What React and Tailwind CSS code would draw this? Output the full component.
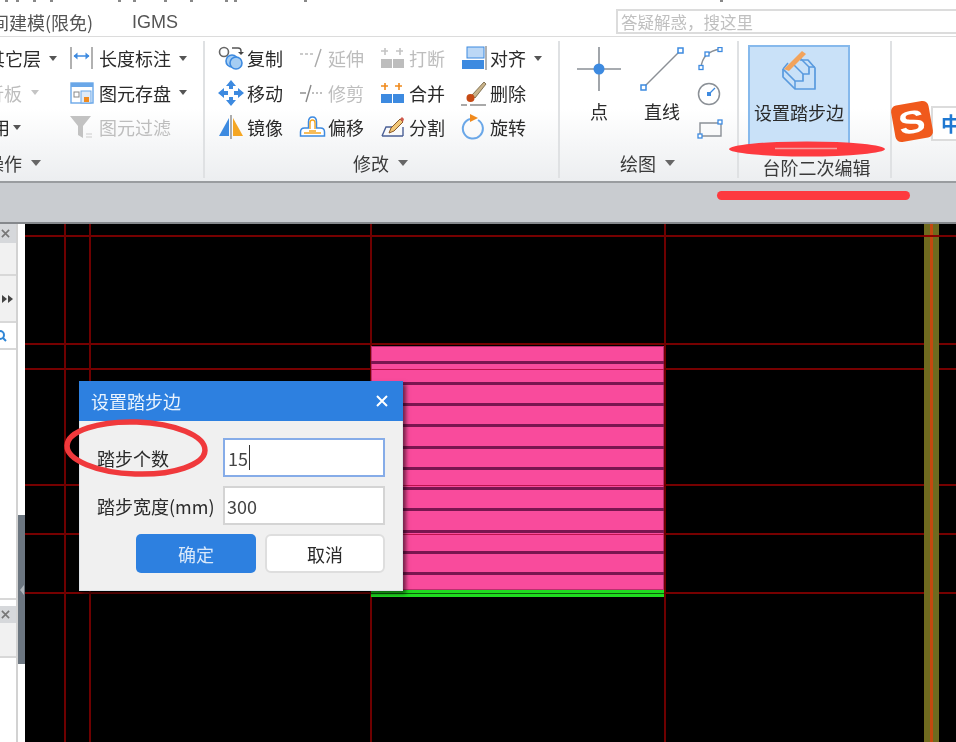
const font = { fontFamily: '"Noto Sans CJK SC", "Liberation Sans", sans-serif' }

const Arrow = ({ className = 'border-t-[#555] ml-2' }) => (
  <span className={`inline-block w-0 h-0 border-x-[4.5px] border-x-transparent border-t-[5px] shrink-0 ${className}`} />
)

const blue = '#3d8ae0'
const orange = '#f5a623'

const IconCopy = () => (
  <svg width="26" height="24" viewBox="0 0 26 24" fill="none">
    <circle cx="6" cy="6" r="4.5" stroke="#666" strokeWidth="1.6" />
    <path d="M14 2h6q3 0 3 3v2" stroke="#555" strokeWidth="1.4" />
    <path d="M20 6l3 3 3-3z" fill="#444" />
    <circle cx="14" cy="15" r="6" fill="#a5cdf3" stroke={blue} strokeWidth="1.6" />
    <circle cx="18" cy="17" r="6" fill="#a5cdf3" stroke={blue} strokeWidth="1.6" />
  </svg>
)
const IconMove = () => (
  <svg width="26" height="26" viewBox="0 0 26 26" fill={blue}>
    <path d="M13 0l5 6h-3v3h-4v-3h-3zM13 26l5-6h-3v-3h-4v3h-3zM0 13l6-5v3h4v4h-4v3zM26 13l-6-5v3h-4v4h4v3z" />
  </svg>
)
const IconMirror = () => (
  <svg width="26" height="24" viewBox="0 0 26 24">
    <path d="M11 3v18H1z" fill={blue} />
    <path d="M15 3v18h10z" fill={orange} />
    <path d="M13 0v24" stroke="#777" strokeWidth="1.2" />
  </svg>
)
const IconExtend = () => (
  <svg width="24" height="22" viewBox="0 0 24 22" fill="none" stroke="#bbb" strokeWidth="1.4">
    <path d="M1 7h3M6 7h3M11 7h3" />
    <path d="M22 2l-6 18" stroke="#aaa" />
  </svg>
)
const IconTrim = () => (
  <svg width="24" height="22" viewBox="0 0 24 22" fill="none" stroke="#888" strokeWidth="1.4">
    <path d="M1 11h6" />
    <path d="M12 3l-5 17" />
    <path d="M13 11h2M17 11h2M21 11h2" stroke="#aaa" />
  </svg>
)
const IconOffset = () => (
  <svg width="27" height="24" viewBox="0 0 27 24" fill="none">
    <path d="M1.500 21v-4q0-4 4-4h4V7q0-5 4-5t4 5v6h4q4 0 4 4v4z" fill="#fff" stroke={blue} strokeWidth="1.500" />
    <path d="M5 18h17M10 16h7M11 14V8q0-3 2.500-3T16 8v6" stroke={orange} strokeWidth="1.400" />
  </svg>
)
const IconBreak = () => (
  <svg width="25" height="22" viewBox="0 0 25 22">
    <path d="M5 1v7M1 4h7M20 1v7M16 4h7" stroke="#c4c4c4" strokeWidth="1.6" />
    <rect x="1" y="12" width="11" height="9" fill="#bdbdbd" />
    <rect x="13" y="12" width="11" height="9" fill="#bdbdbd" />
  </svg>
)
const IconMerge = () => (
  <svg width="25" height="22" viewBox="0 0 25 22">
    <path d="M5 1v7M1 4h7M19 1v7M15 4h7" stroke="#f08a1d" strokeWidth="1.6" />
    <rect x="1" y="12" width="11" height="9" fill={blue} />
    <rect x="13" y="12" width="11" height="9" fill={blue} />
  </svg>
)
const IconSplit = () => (
  <svg width="25" height="24" viewBox="0 0 25 24" fill="none">
    <path d="M2 21h21M2 21l4-9h11" stroke="#4a5f95" strokeWidth="1.4" />
    <path d="M23 12v9" stroke="#4a5f95" strokeWidth="1.4" />
    <path d="M9 18l2-5 9-9 3 3-9 9z" fill="#f2c879" stroke="#8a5a2a" strokeWidth="1" />
    <path d="M20 4l2-2 2 2-1 3z" fill="#d0584a" />
  </svg>
)
const IconAlign = () => (
  <svg width="26" height="24" viewBox="0 0 26 24">
    <rect x="6" y="1" width="17" height="11" fill="#bcd8f6" stroke={blue} />
    <rect x="1" y="14" width="22" height="9" fill={blue} />
    <path d="M25 0v24" stroke="#888" strokeWidth="1.3" />
  </svg>
)
const IconDelete = () => (
  <svg width="26" height="26" viewBox="0 0 26 26" fill="none">
    <path d="M11 15L23 2l2 2-11 14z" fill="#c9b38a" stroke="#6b5a3a" strokeWidth="0.8" />
    <circle cx="9.5" cy="18" r="4" fill="#c64a14" />
    <path d="M0 25h6M9 25h16" stroke="#555" strokeWidth="1.2" />
  </svg>
)
const IconRotate = () => (
  <svg width="24" height="26" viewBox="0 0 24 26" fill="none">
    <path d="M9 5a10 10 0 1 0 8 1" stroke="#6aa7e8" strokeWidth="2" />
    <path d="M9 0l8 4-8 4z" fill="#f08a1d" />
  </svg>
)
const IconLength = () => (
  <svg width="24" height="22" viewBox="0 0 24 22" fill="none">
    <path d="M1 0v22M22 0v22" stroke="#888" strokeWidth="1.3" />
    <path d="M4 9h15" stroke={blue} strokeWidth="1.5" />
    <path d="M3.500 9l4-3.500v7zM19.500 9l-4-3.500v7z" fill={blue} />
  </svg>
)
const IconSave = () => (
  <svg width="24" height="22" viewBox="0 0 24 22" fill="none">
    <rect x="1" y="1" width="22" height="20" fill="#fff" stroke="#6aa7e8" strokeWidth="1.4" />
    <path d="M1 1h22v4H1z" fill="#6aa7e8" />
    <rect x="4" y="10" width="5" height="5" stroke="#888" />
    <rect x="11" y="9" width="10" height="12" fill="#dfeaf6" stroke="#6aa7e8" />
    <rect x="14" y="15" width="5" height="5" fill="#f08a1d" />
  </svg>
)
const IconFilter = () => (
  <svg width="24" height="24" viewBox="0 0 24 24">
    <path d="M0 1h21l-8 10v12l-5-3v-9z" fill="#c2c2c2" />
    <path d="M16 19h6M16 22h6" stroke="#ccc" strokeWidth="1.2" />
  </svg>
)
const IconPoint = () => (
  <svg width="44" height="44" viewBox="0 0 44 44" fill="none">
    <path d="M22 0v44M0 22h44" stroke="#8b9096" strokeWidth="1.6" />
    <circle cx="22" cy="22" r="5.5" fill={blue} />
  </svg>
)
const IconLine = () => (
  <svg width="44" height="44" viewBox="0 0 44 44" fill="none">
    <path d="M3 41L41 3" stroke="#8b9096" strokeWidth="1.5" />
    <rect x="1" y="38" width="5" height="5" fill="#fff" stroke={blue} strokeWidth="1.5" />
    <rect x="38" y="1" width="5" height="5" fill="#fff" stroke={blue} strokeWidth="1.5" />
  </svg>
)
const IconArc = () => (
  <svg width="26" height="24" viewBox="0 0 26 24" fill="none">
    <path d="M4 21Q5 5 23 2" stroke="#8b9096" strokeWidth="1.4" />
    <rect x="2" y="18.5" width="4" height="4" fill="#fff" stroke={blue} strokeWidth="1.3" />
    <rect x="8" y="5" width="4" height="4" fill="#fff" stroke={blue} strokeWidth="1.3" />
    <rect x="21" y="0.5" width="4" height="4" fill="#fff" stroke={blue} strokeWidth="1.3" />
  </svg>
)
const IconCircle = () => (
  <svg width="24" height="24" viewBox="0 0 24 24" fill="none">
    <circle cx="12" cy="12" r="10.5" stroke="#8b9096" strokeWidth="1.5" />
    <path d="M12 12l6-6" stroke={blue} strokeWidth="1.2" />
    <rect x="10" y="10" width="4" height="4" fill={blue} />
  </svg>
)
const IconRect = () => (
  <svg width="26" height="20" viewBox="0 0 26 20" fill="none">
    <path d="M3 17V4h21v13z" stroke="#8b9096" strokeWidth="1.4" />
    <rect x="1" y="15" width="4" height="4" fill="#fff" stroke={blue} strokeWidth="1.3" />
    <rect x="21" y="1" width="4" height="4" fill="#fff" stroke={blue} strokeWidth="1.3" />
  </svg>
)
const IconStairs = () => (
  <svg width="35" height="40" viewBox="0 0 35 40" fill="none" stroke="#5a9ade" strokeLinejoin="round">
    <path d="M1 19v8l12 12h20V18l-7-8h-8" strokeWidth="1.700" />
    <path d="M1 19l12 12h8v-7h6v-7h6" strokeWidth="1.700" />
    <path d="M13 39v-8M21 24L10 13M27 17L18 8M6 13L1 19" strokeWidth="1.500" />
    <path d="M2 19L20 1l4 3L7 21z" fill="#f2a35c" stroke="none" />
  </svg>
)

const Tool = ({ icon, label, arrow, off }) => (
  <div className="flex items-center h-[34.5px]">
    <span className="w-[29px] shrink-0 flex items-center">{icon}</span>
    <span className={off ? 'text-[#bdbdbd]' : 'text-[#2a2a2a]'}>{label}</span>
    {arrow && <Arrow />}
  </div>
)

const Title = ({ children }) => (
  <div className="h-[28px] flex items-center justify-center pr-[2px] text-[#3a3a3a]">
    {children}
    <Arrow className="border-t-[#666] ml-[9px] border-x-[5.5px] border-t-[6px]" />
  </div>
)

const modify = [
  [['复制', <IconCopy />], ['移动', <IconMove />], ['镜像', <IconMirror />]],
  [['延伸', <IconExtend />, true], ['修剪', <IconTrim />, true], ['偏移', <IconOffset />]],
  [['打断', <IconBreak />, true], ['合并', <IconMerge />], ['分割', <IconSplit />]],
  [['对齐', <IconAlign />, false, true], ['删除', <IconDelete />], ['旋转', <IconRotate />]],
]

const hLines = [11, 119, 144, 260, 309, 368]
const vLines = [39, 64, 345, 639]
const stripes = [362, 383, 404, 425, 447, 468, 488, 509, 531, 552, 573]
const pinkLines = [369, 485, 534]
const topMarks = [5, 16, 33, 50, 118, 133, 164, 190, 225, 234, 304, 720]

function Canvas() {
  return (
    <div className="relative flex-1 bg-black overflow-hidden">
      {hLines.map(y => (
        <div key={y} className="absolute left-0 right-0 h-[2px] bg-[#760000]" style={{ top: y }} />
      ))}
      {vLines.map(x => (
        <div key={x} className="absolute top-0 bottom-0 w-[2px] bg-[#6e0000]" style={{ left: x }} />
      ))}
      <div className="absolute left-[346px] top-[122px] w-[293px] h-[244px] bg-[#f94b9c] border border-[#b8306f]" />
      <div className="absolute left-[899px] top-0 bottom-0 w-[15px] bg-[#6f6a1f]" />
      <div className="absolute left-[905px] top-0 bottom-0 w-[3px] bg-[#c4480f]" />
      <div className="absolute left-[899px] top-[11px] w-[15px] h-[2px] bg-[#8a0000]" />
      {stripes.map(y => (
        <div key={y} className="absolute left-[346px] w-[293px] h-[3px] bg-[#7a1650]" style={{ top: y - 225 }} />
      ))}
      {pinkLines.map(y => (
        <div key={y} className="absolute left-[346px] w-[293px] h-[1px] bg-[#c0124e]" style={{ top: y - 224 }} />
      ))}
      <div className="absolute left-[346px] top-[366px] w-[293px] h-[7px] bg-[#1fdc1f]" />
      <div className="absolute left-[346px] top-[369px] w-[293px] h-[1px] bg-[#0b5d0b]" />
    </div>
  )
}

function Dialog() {
  return (
    <div className="absolute left-[79px] top-[381px] w-[324px] h-[210px] bg-[#f0f0f0] border border-[#dfe3e8] shadow-[3px_3px_4px_rgba(0,0,0,0.55)] flex flex-col">
      <div className="h-[40px] bg-[#2d80e0] text-[#eaf3fd] flex items-center justify-between pl-[12px] pr-[15px] -mx-px -mt-px shrink-0">
        <span>设置踏步边</span>
        <svg width="12" height="12" viewBox="0 0 12 12" stroke="#fff" strokeWidth="2"><path d="M1 1l10 10M11 1L1 11" /></svg>
      </div>
      <div className="flex flex-col gap-[9px] pt-[17px] pl-[17px] pr-[17px]">
        <div className="flex items-center h-[39px] text-[#2a2a2a]">
          <span className="w-[126px]">踏步个数</span>
          <div className="flex-1 h-full bg-white border-2 border-[#86ace8] flex items-center pl-[3px]">
            <span className="text-[#444] text-[18px]">15</span>
            <span className="w-[1.5px] h-[25px] bg-[#333] ml-px" />
          </div>
        </div>
        <div className="flex items-center h-[39px] text-[#2a2a2a]">
          <span className="w-[126px] whitespace-nowrap">踏步宽度(mm)</span>
          <div className="flex-1 h-full bg-white border-2 border-[#d4d4d4] flex items-center pl-[2px] text-[#444]">300</div>
        </div>
        <div className="flex justify-end gap-[9px] h-[39px]">
          <button className="w-[120px] h-full rounded-[5px] bg-[#2d80e0] text-[#d9e8fa]">确定</button>
          <button className="w-[120px] h-full rounded-[6px] bg-white border-2 border-[#dedede] text-[#2a2a2a]">取消</button>
        </div>
      </div>
    </div>
  )
}

export default function App() {
  return (
    <div className="relative w-[956px] h-[742px] overflow-hidden bg-white flex flex-col text-[18px] leading-[18px] blur-[0.45px]" style={font}>
      {topMarks.map(x => (
        <span key={x} className="absolute top-0 w-[3px] h-[2px] bg-[#888]" style={{ left: x }} />
      ))}

      <div className="h-[37px] shrink-0 flex items-start border-b border-[#dcdcdc]">
        <div className="w-[616px] shrink-0 flex pt-[13px] text-[#555] -ml-[9px]">
          <span className="w-[141px] whitespace-nowrap">间建模(限免)</span>
          <span style={{ fontFamily: '"Liberation Sans", sans-serif' }}>IGMS</span>
        </div>
        <div className="ml-[9px] mt-[9px] flex-1 h-[25px] border-2 border-r-0 border-[#dcdcdc] text-[16.5px] text-[#c0c0c0] flex items-center pl-[3px]">
          答疑解惑，搜这里
        </div>
      </div>

      <div className="h-[146px] shrink-0 flex items-start pt-[4px] bg-gradient-to-b from-white from-50% to-[#eceef0] border-b-2 border-[#999c9f]">
        <div className="w-[205px] h-[137px] shrink-0 border-r-2 border-[#dfe1e3] flex flex-col overflow-hidden">
          <div className="h-[108px] flex">
            <div className="w-[70px] shrink-0">
              <div className="h-[34.5px] flex items-center -ml-[13px] whitespace-nowrap text-[#2a2a2a]">其它层<Arrow /></div>
              <div className="h-[34.5px] flex items-center -ml-[14px] whitespace-nowrap text-[#bdbdbd]">折板<Arrow className="border-t-[#c4c4c4] ml-[9px]" /></div>
              <div className="h-[34.5px] flex items-center -ml-[8px] whitespace-nowrap text-[#2a2a2a]">用<Arrow className="border-t-[#555] ml-[3px]" /></div>
            </div>
            <div>
              <Tool icon={<IconLength />} label="长度标注" arrow />
              <Tool icon={<IconSave />} label="图元存盘" arrow />
              <Tool icon={<IconFilter />} label="图元过滤" off />
            </div>
          </div>
          <div className="h-[28px] flex items-center -ml-[14px] whitespace-nowrap text-[#3a3a3a]">
            操作<Arrow className="border-t-[#666] ml-[9px] border-x-[5.5px] border-t-[6px]" />
          </div>
        </div>

        <div className="w-[355px] h-[137px] shrink-0 border-r-2 border-[#dfe1e3] flex flex-col">
          <div className="h-[108px] flex pl-[13px]">
            {modify.map((col, i) => (
              <div key={i} className="w-[81px] shrink-0 whitespace-nowrap">
                {col.map(([label, icon, off, arrow]) => (
                  <Tool key={label} label={label} icon={icon} off={off} arrow={arrow} />
                ))}
              </div>
            ))}
          </div>
          <Title>修改</Title>
        </div>

        <div className="w-[179px] h-[137px] shrink-0 border-r-2 border-[#dfe1e3] flex flex-col">
          <div className="h-[108px] flex pt-[6px] pl-[17px]">
            <div className="w-[44px] flex flex-col items-center gap-[11px] text-[#2a2a2a]">
              <IconPoint />
              <span>点</span>
            </div>
            <div className="w-[44px] ml-[19px] flex flex-col items-center gap-[11px] text-[#2a2a2a]">
              <IconLine />
              <span>直线</span>
            </div>
            <div className="ml-[13px] flex flex-col items-start gap-[11px]">
              <IconArc />
              <IconCircle />
              <div className="mt-[2px]"><IconRect /></div>
            </div>
          </div>
          <Title>绘图</Title>
        </div>

        <div className="w-[153px] h-[137px] shrink-0 border-r-2 border-[#dfe1e3] flex flex-col">
          <div className="h-[108px] pt-[4px] pl-[9px]">
            <div className="w-[102px] h-[103px] bg-[#c9e1f8] border-2 border-[#86b9ec] flex flex-col items-center pt-[3px] text-[#2a2a2a]">
              <IconStairs />
              <span className="mt-[13px] whitespace-nowrap">设置踏步边</span>
            </div>
          </div>
          <div className="h-[28px] pt-[7px] pl-[4px] flex items-center justify-center text-[#3a3a3a] whitespace-nowrap">台阶二次编辑</div>
        </div>
      </div>

      <div className="h-[41px] shrink-0 bg-[#c9ccd0] border-b-2 border-[#85888c]" />

      <div className="flex-1 flex min-h-0">
        <div className="w-[18px] shrink-0 flex flex-col bg-white border-r-2 border-[#d2d2d2]">
          <div className="h-[19px] bg-[#d6d8db] flex items-center pl-px">
            <svg width="9" height="9" viewBox="0 0 10 10" stroke="#777" strokeWidth="1.8"><path d="M1 1l8 8M9 1L1 9" /></svg>
          </div>
          <div className="h-[33px] bg-[#f1f1f1] border-b-2 border-[#d8d8d8]" />
          <div className="h-[47px] bg-[#f1f1f1] border-b-2 border-[#d8d8d8] flex items-center">
            <svg width="13" height="8" viewBox="0 0 13 8" fill="#444"><path d="M2 0l5 4-5 4zM8 0l5 4-5 4z" /></svg>
          </div>
          <div className="h-[27px] border-b-2 border-[#d8d8d8] flex items-center overflow-hidden">
            <svg width="8" height="12" viewBox="0 0 8 12" fill="none" stroke="#2f86d6" strokeWidth="2"><circle cx="0" cy="5" r="4" /><path d="M3 8l3 3" /></svg>
          </div>
          <div className="h-[250px] border-b-2 border-[#d8d8d8]" />
          <div className="h-[6px]" />
          <div className="h-[17px] bg-[#d6d8db] flex items-center pl-px">
            <svg width="9" height="9" viewBox="0 0 10 10" stroke="#777" strokeWidth="1.8"><path d="M1 1l8 8M9 1L1 9" /></svg>
          </div>
          <div className="h-[35px] bg-[#f1f1f1] border-b-2 border-[#d8d8d8]" />
        </div>
        <div className="w-[7px] shrink-0 flex flex-col bg-white">
          <div className="h-[291px]" />
          <div className="h-[149px] bg-[#6c7680] flex items-center justify-end pr-px">
            <span className="w-0 h-0 border-y-[5px] border-y-transparent border-r-[4px] border-r-[#aeb4ba]" />
          </div>
        </div>
        <Canvas />
      </div>

      <Dialog />

      <div className="absolute left-[931px] top-[106px] w-[30px] h-[35px] bg-white border-2 border-[#dcdcdc] pl-[8px] flex items-center text-[#1f78d1] font-bold text-[20px] overflow-hidden">中</div>
      <div className="absolute left-[893px] top-[103px] w-[38px] h-[37px] bg-[#f0591c] rounded-[6px] -rotate-[10deg] flex items-center justify-center text-white font-black text-[32px]" style={{ fontFamily: '"Liberation Sans", sans-serif' }}>
        <span className="scale-x-[1.25]">S</span>
      </div>

      <svg className="absolute left-0 top-0 pointer-events-none" width="956" height="742" fill="none">
        <ellipse cx="807" cy="149" rx="78" ry="7.500" fill="#fd3a3f" />
        <path d="M775 148.500h62" stroke="#f4a2a2" strokeWidth="1.500" />
        <rect x="717" y="191" width="193" height="9" rx="4.500" fill="#fd3a3f" />
        <ellipse cx="136" cy="448" rx="69" ry="26" stroke="#f0393c" strokeWidth="5.500" transform="rotate(2 136 448)" />
      </svg>
    </div>
  )
}
